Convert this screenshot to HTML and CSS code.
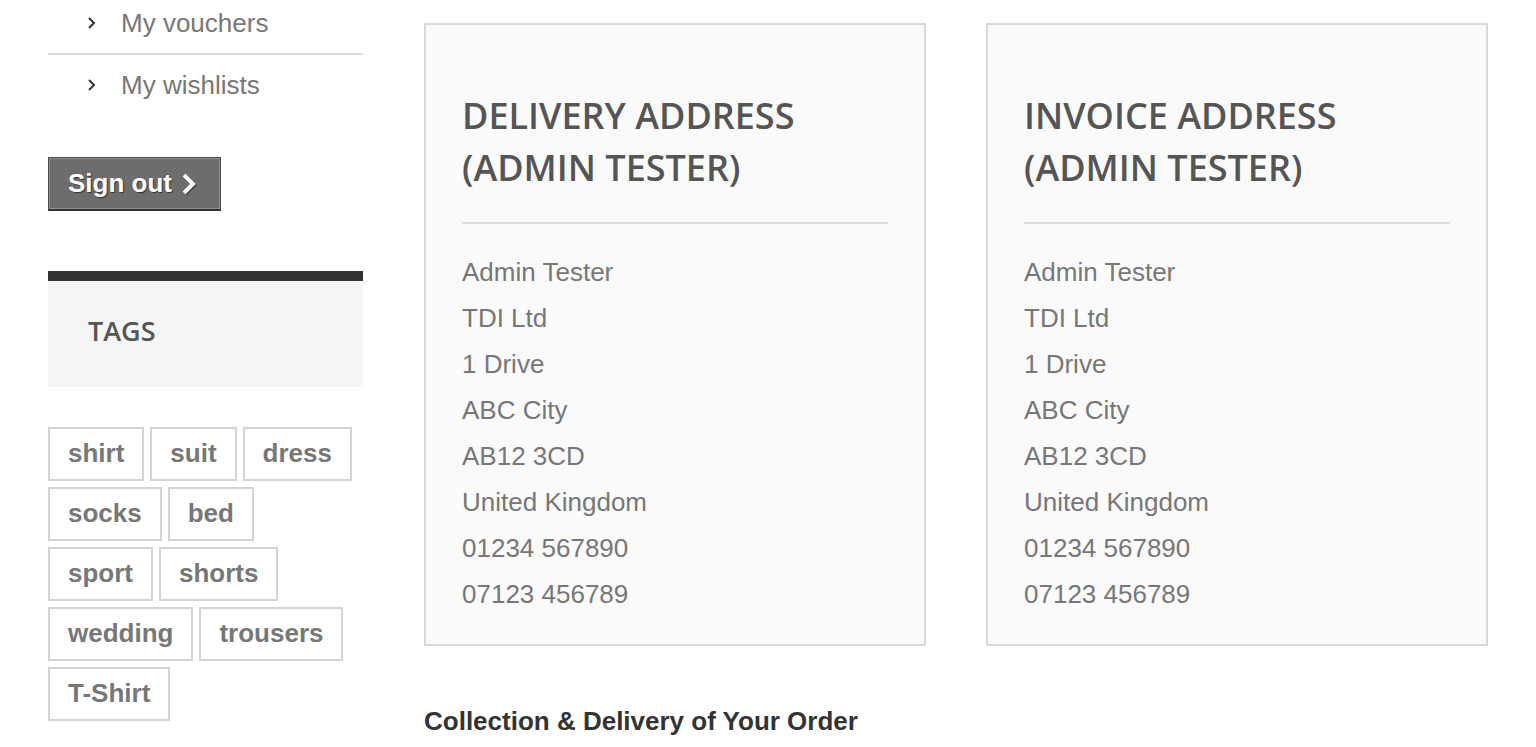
FILE: index.html
```html
<!DOCTYPE html>
<html lang="en">
<head>
  <meta charset="UTF-8">
  <title>My account - Addresses</title>
  <link rel="stylesheet" href="styles.css">
</head>
<body>

  <div class="page">
    <aside class="sidebar">
      <ul class="account-menu">
        <li>
          <svg class="chev" width="10" height="14" viewBox="0 0 10 14"><polyline points="2,2 7,7 2,12" /></svg>
          <a href="#">My vouchers</a>
        </li>
        <li>
          <svg class="chev" width="10" height="14" viewBox="0 0 10 14"><polyline points="2,2 7,7 2,12" /></svg>
          <a href="#">My wishlists</a>
        </li>
      </ul>

      <button class="btn-signout">Sign out
        <svg width="18" height="26" viewBox="0 0 18 26"><polyline points="5,4 14,13 5,22" /></svg>
      </button>

      <div class="widget">
        <h4 class="widget-title">TAGS</h4>
      </div>

      <div class="tags">
        <a href="#" class="tag">shirt</a>
        <a href="#" class="tag">suit</a>
        <a href="#" class="tag">dress</a>
        <a href="#" class="tag">socks</a>
        <a href="#" class="tag">bed</a>
        <a href="#" class="tag">sport</a>
        <a href="#" class="tag">shorts</a>
        <a href="#" class="tag">wedding</a>
        <a href="#" class="tag">trousers</a>
        <a href="#" class="tag">T-Shirt</a>
      </div>
    </aside>

    <main class="content">
      <div class="addresses">
        <div class="address-box">
          <h3>DELIVERY ADDRESS<br>(ADMIN TESTER)</h3>
          <ul class="address-lines">
            <li>Admin Tester</li>
            <li>TDI Ltd</li>
            <li>1 Drive</li>
            <li>ABC City</li>
            <li>AB12 3CD</li>
            <li>United Kingdom</li>
            <li>01234 567890</li>
            <li>07123 456789</li>
          </ul>
        </div>
        <div class="address-box">
          <h3>INVOICE ADDRESS<br>(ADMIN TESTER)</h3>
          <ul class="address-lines">
            <li>Admin Tester</li>
            <li>TDI Ltd</li>
            <li>1 Drive</li>
            <li>ABC City</li>
            <li>AB12 3CD</li>
            <li>United Kingdom</li>
            <li>01234 567890</li>
            <li>07123 456789</li>
          </ul>
        </div>
      </div>

      <h4 class="section-title">Collection &amp; Delivery of Your Order</h4>
    </main>
  </div>

</body>
</html>
```

FILE: styles.css
```css
body {
  margin: 0;
  font-family: 'Liberation Sans', Arial, sans-serif;
  color: #777;
  background: #fff;
}
.page {
  display: flex;
  gap: 61px;
  padding: 0 48px;
}
.sidebar {
  width: 315px;
  flex-shrink: 0;
}
.account-menu {
  list-style: none;
  margin: -7px 0 0;
  padding: 0;
}
.account-menu li {
  display: flex;
  align-items: center;
  height: 60px;
  padding-left: 39px;
  border-bottom: 2px solid #ddd;
}
.account-menu li:last-child {
  border-bottom: none;
}
.account-menu a {
  color: #777;
  font-size: 26px;
  text-decoration: none;
}
.chev {
  margin-right: 24px;
  fill: none;
  stroke: #333;
  stroke-width: 2;
}
.btn-signout {
  display: flex;
  align-items: center;
  gap: 7px;
  margin-top: 42px;
  height: 54px;
  padding: 0 23px 0 19px;
  background: #6d6d6d;
  border: 1px solid #4e4e4e;
  border-bottom: 2px solid #333;
  box-shadow: inset 0 0 0 1px #8c8c8c;
  color: #fff;
  font-family: 'Liberation Sans', Arial, sans-serif;
  font-weight: bold;
  font-size: 26px;
  text-shadow: 1px 1px 1px #333;
}
.btn-signout svg {
  fill: none;
  stroke: #fff;
  stroke-width: 4;
  filter: drop-shadow(1px 1px 0 #333);
}
.widget {
  margin-top: 60px;
  border-top: 10px solid #333;
  background: #f5f5f5;
  height: 116px;
  box-sizing: border-box;
  padding-top: 31px;
}
.widget-title {
  margin: 0;
  padding-left: 40px;
  font-family: 'Open Sans', sans-serif;
  font-weight: 600;
  font-size: 27px;
  line-height: 38px;
  color: #555;
}
.tags {
  display: flex;
  flex-wrap: wrap;
  gap: 6px;
  margin-top: 40px;
}
.tag {
  display: block;
  line-height: 48px;
  padding: 0 18px 2px;
  border: 2px solid #d4d4d4;
  color: #777;
  font-weight: bold;
  font-size: 26px;
  text-decoration: none;
}
.content {
  flex: 1;
  padding-top: 23px;
}
.addresses {
  display: flex;
  gap: 60px;
}
.address-box {
  flex: 1;
  background: #fafafa;
  border: 2px solid #d9d9d9;
  padding: 65px 36px 27px;
}
.address-box h3 {
  margin: 0;
  padding-bottom: 28px;
  border-bottom: 2px solid #ddd;
  font-family: 'Open Sans', sans-serif;
  font-weight: 600;
  font-size: 36px;
  line-height: 52px;
  color: #555;
}
.address-lines {
  list-style: none;
  margin: 25px 0 0;
  padding: 0;
  font-size: 26px;
  line-height: 46px;
  color: #777;
}
.section-title {
  margin: 60px 0 0;
  font-size: 26px;
  color: #333;
}
```
